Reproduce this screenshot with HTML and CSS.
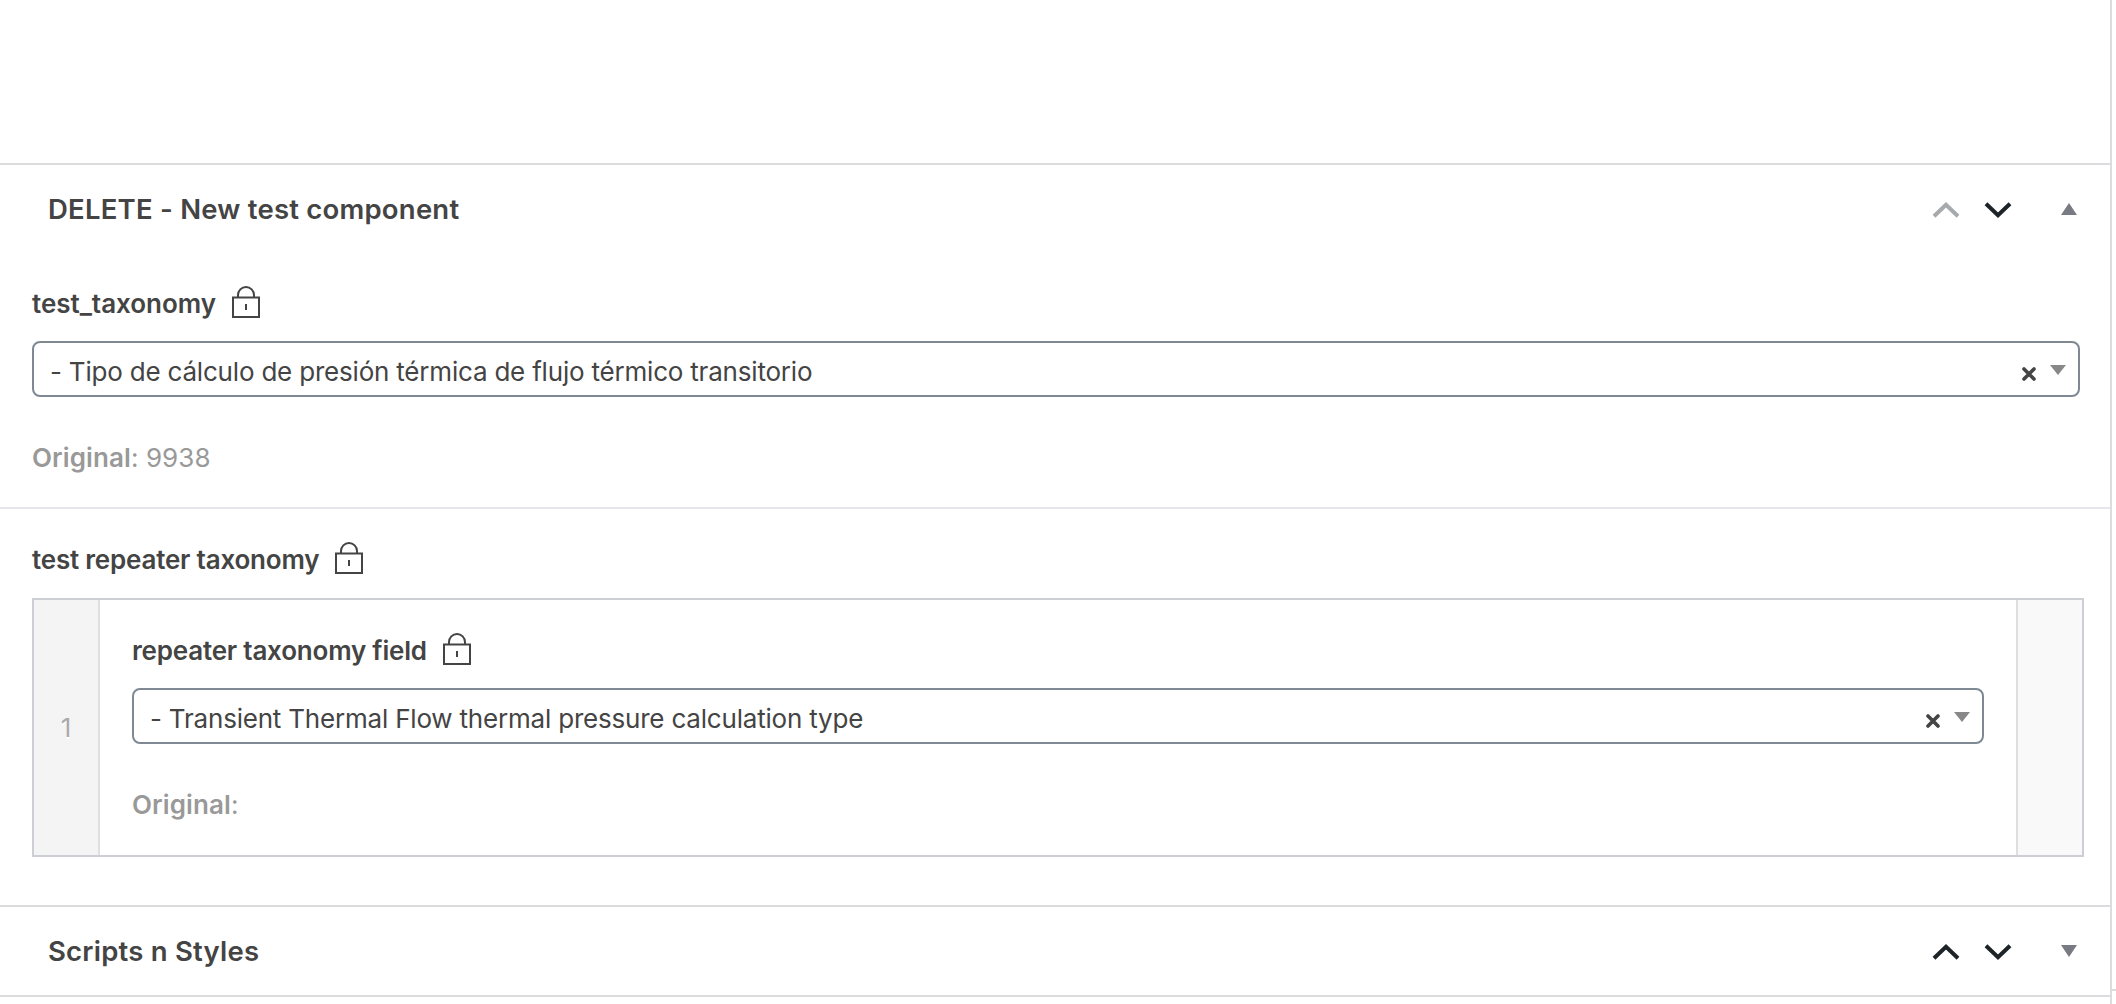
FILE: index.html
```html
<!DOCTYPE html>
<html lang="en">
<head>
  <meta charset="UTF-8">
  <title>Edit Post</title>
  <link rel="stylesheet" href="styles.css">
</head>
<body>

  <!-- Shared icons -->
  <svg class="sprite" xmlns="http://www.w3.org/2000/svg">
    <symbol id="lock" viewBox="0 0 28 32">
      <path d="M1 11.5h26V31H1zM6 11V9a8 8 0 0 1 16 0v2" fill="none" stroke="currentColor" stroke-width="2"/>
      <path d="M14 18v6" stroke="currentColor" stroke-width="2"/>
    </symbol>
    <symbol id="up" viewBox="0 0 28 16">
      <path d="M2 14.3 14 2.8l12 11.5" fill="none" stroke="currentColor" stroke-width="4"/>
    </symbol>
    <symbol id="down" viewBox="0 0 28 16">
      <path d="M2 1.7 14 13.2 26 1.7" fill="none" stroke="currentColor" stroke-width="4"/>
    </symbol>
    <symbol id="clear" viewBox="0 0 14 14">
      <path d="M2 2l10 10M12 2 2 12" fill="none" stroke="currentColor" stroke-width="3.6" stroke-linecap="round"/>
    </symbol>
  </svg>

  <div class="editor">
    <div class="metaboxes">

      <div class="postbox">
        <div class="postbox-header">
          <h2>DELETE - New test component</h2>
          <div class="handle-actions">
            <svg class="order disabled"><use href="#up"/></svg>
            <svg class="order"><use href="#down"/></svg>
            <span class="toggle open"></span>
          </div>
        </div>

        <div class="field">
          <div class="label label-key"><span>test_taxonomy</span> <svg class="lock"><use href="#lock"/></svg></div>
          <div class="select">
            <span class="value">- Tipo de cálculo de presión térmica de flujo térmico transitorio</span>
            <svg class="clear"><use href="#clear"/></svg>
            <span class="arrow"></span>
          </div>
          <p class="original"><strong>Original</strong>: 9938</p>
        </div>

        <div class="field">
          <div class="label"><span>test repeater taxonomy</span> <svg class="lock"><use href="#lock"/></svg></div>
          <div class="repeater">
            <div class="row-handle order-handle">1</div>
            <div class="row-fields">
              <div class="label"><span>repeater taxonomy field</span> <svg class="lock"><use href="#lock"/></svg></div>
              <div class="select">
                <span class="value">- Transient Thermal Flow thermal pressure calculation type</span>
                <svg class="clear"><use href="#clear"/></svg>
                <span class="arrow"></span>
              </div>
              <p class="original"><strong>Original</strong>:</p>
            </div>
            <div class="row-handle remove-handle"></div>
          </div>
        </div>
      </div>

      <div class="postbox">
        <div class="postbox-header">
          <h2>Scripts n Styles</h2>
          <div class="handle-actions">
            <svg class="order"><use href="#up"/></svg>
            <svg class="order"><use href="#down"/></svg>
            <span class="toggle"></span>
          </div>
        </div>
      </div>

      <div class="postbox"></div>
    </div>
    <div class="sidebar"></div>
  </div>

</body>
</html>
```
FILE: styles.css
```css
* {
  box-sizing: border-box;
}

body {
  margin: 0;
  height: 1004px;
  overflow: hidden;
  background: #fff;
  color: #444;
  font-family: Inter, "Liberation Sans", sans-serif;
  font-size: 26px;
  line-height: 36px;
}

.sprite {
  display: none;
}

.editor {
  display: flex;
  height: 1004px;
}

.metaboxes {
  width: 2112px;
  padding-top: 163px;
  border-right: 2px solid #dcdcde;
}

.sidebar {
  flex: 1;
  height: 991px;
  border-bottom: 2px solid #dcdcde;
}

/* Panels */
.postbox {
  border-top: 2px solid #dcdcde;
}

.postbox-header {
  display: flex;
  align-items: center;
  justify-content: space-between;
  height: 88px;
  padding: 0 33px 0 48px;
}

h2 {
  margin: 0;
  font-size: 27.5px;
  font-weight: 640;
  line-height: 36px;
  letter-spacing: 0.22px;
}

.handle-actions {
  display: flex;
  align-items: center;
}

.order {
  width: 28px;
  height: 16px;
  margin-top: 2px;
  margin-right: 24px;
  color: #1d2327;
}

.order.disabled {
  color: #a7aaad;
}

.toggle {
  margin-left: 25px;
  border: 8px solid transparent;
  border-top: 12px solid #787c82;
  border-bottom: 0;
}

.toggle.open {
  border-top: 0;
  border-bottom: 12px solid #787c82;
}

/* Fields */
.field {
  padding: 33px 30px 31px 32px;
}

.field + .field {
  padding: 33px 26px 48px 32px;
  border-top: 2px solid #e5e5ea;
}

.label {
  display: flex;
  align-items: center;
  gap: 16px;
  height: 32px;
  font-weight: 560;
  letter-spacing: -0.2px;
}

.label span {
  padding-top: 3px;
}

.label-key {
  letter-spacing: -0.02px;
}

.lock {
  width: 28px;
  height: 32px;
}

.select {
  display: flex;
  align-items: center;
  height: 56px;
  margin-top: 23px;
  padding: 0 12px 0 16px;
  border: 2px solid #7e8993;
  border-radius: 8px;
}

.value {
  flex: 1;
  padding-top: 6px;
  letter-spacing: -0.2px;
}

.clear {
  width: 14px;
  height: 14px;
  margin-top: 9px;
  margin-right: 14px;
}

.arrow {
  margin-top: 2px;
  border: 8px solid transparent;
  border-top: 10px solid #888;
  border-bottom: 0;
}

.original {
  margin: 43px 0 0;
  color: #999;
  letter-spacing: 0.1px;
}

.original strong {
  font-weight: 640;
}

/* Repeater */
.repeater {
  display: flex;
  height: 259px;
  margin-top: 24px;
  border: 2px solid #ccd0d4;
}

.row-handle {
  display: flex;
  align-items: center;
  justify-content: center;
  width: 64px;
}

.order-handle {
  background: #f4f4f4;
  color: #aaa;
  text-shadow: 0 2px 0 #fff;
}

.remove-handle {
  background: #f9f9f9;
}

.row-fields {
  flex: 1;
  padding: 33px 32px 0;
  border: solid #dfdfdf;
  border-width: 0 2px;
}
```
